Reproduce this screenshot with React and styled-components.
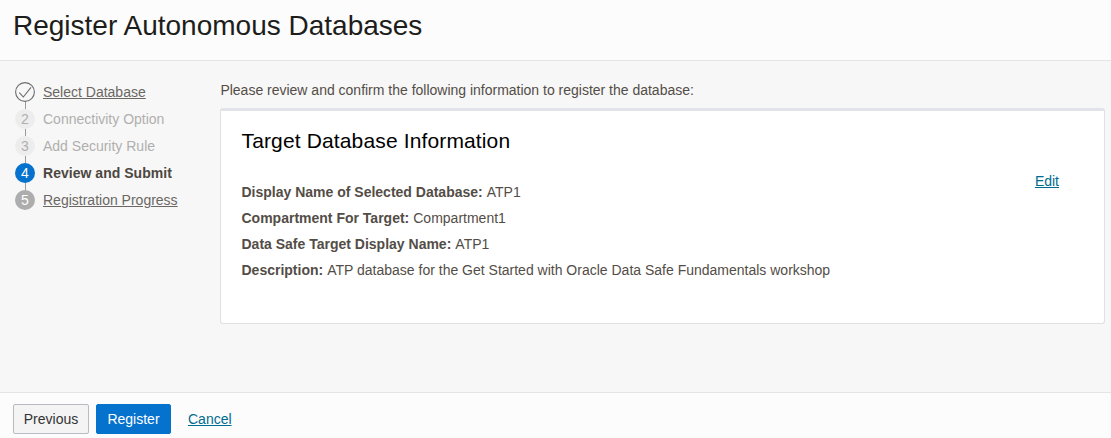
import React from "react";
import styled, { createGlobalStyle, css } from "styled-components";

const GlobalStyle = createGlobalStyle`
  * { box-sizing: border-box; }
  body {
    margin: 0;
    background: #f7f7f7;
    color: #534d47;
    font-family: "Liberation Sans", Arial, sans-serif;
    font-size: 14px;
    line-height: 20px;
  }
`;

const Page = styled.div`
  display: flex;
  flex-direction: column;
  height: 438px;
  overflow: hidden;
`;

const Header = styled.header`
  flex: none;
  height: 61px;
  padding: 9px 13px 0;
  background: #fcfcfc;
  border-bottom: 1px solid #e4e4e4;
`;

const Title = styled.h1`
  margin: 0;
  font-size: 28px;
  line-height: 34px;
  font-weight: 400;
  color: #1d1d1b;
  white-space: nowrap;
`;

const Body = styled.main`
  flex: 1;
  display: flex;
  padding: 0 6px 0 15px;
`;

const Steps = styled.ol`
  flex: none;
  width: 205px;
  margin: 0;
  padding: 21px 0 0;
  list-style: none;
`;

const Step = styled.li`
  display: flex;
  gap: 8px;
  height: 27px;
`;

const Rail = styled.div`
  display: flex;
  flex-direction: column;
  align-items: center;
  width: 20px;
`;

const Connector = styled.span`
  width: 1px;
  height: 7px;
  margin-left: 1px;
  background: #9a9a9a;
`;

const markers = {
  done: css`background: transparent;`,
  disabled: css`background: #ededed; color: #b0afae;`,
  current: css`background: #0572ce; color: #fff;`,
  next: css`background: #adadad; color: #fff;`,
};

const Marker = styled.span`
  flex: none;
  width: 20px;
  height: 20px;
  border-radius: 50%;
  text-align: center;
  ${(p) => markers[p.$state]}
`;

const labels = {
  done: css`color: #6a6764; text-decoration: underline;`,
  disabled: css`color: #b0afae;`,
  current: css`color: #4d4741; font-weight: 700; letter-spacing: 0.03px;`,
  next: css`color: #6a6764; text-decoration: underline;`,
};

const StepLabel = styled.span`
  white-space: nowrap;
  ${(p) => labels[p.$state]}
`;

const CheckSvg = styled.svg`
  display: block;
`;

const Content = styled.section`
  flex: 1;
  padding-top: 19px;
`;

const Intro = styled.p`
  margin: 0 0 8px 0.4px;
  letter-spacing: -0.006px;
`;

const Card = styled.article`
  height: 216px;
  padding: 18px 45px 0 20.5px;
  background: #fff;
  border: 1px solid #dfe0e3;
  border-top: 3px solid #e1e3e8;
  border-radius: 3px;
`;

const CardTitle = styled.h2`
  margin: 0;
  font-size: 21px;
  line-height: 24px;
  font-weight: 400;
  letter-spacing: 0.14px;
  color: #000;
`;

const CardBody = styled.div`
  display: flex;
  justify-content: space-between;
  align-items: flex-start;
  padding-top: 18px;
`;

const Details = styled.dl`
  margin: 8px 0 0;
`;

const Detail = styled.div`
  display: flex;
  gap: 4px;
  line-height: 26px;
  white-space: nowrap;
`;

const Term = styled.dt`
  font-weight: 700;
`;

const Value = styled.dd`
  margin: 0;
`;

const Link = styled.a`
  color: #006b8f;
  text-decoration: underline;
  cursor: pointer;
`;

const Footer = styled.footer`
  flex: none;
  display: flex;
  align-items: center;
  height: 46px;
  padding: 7px 13px 0;
  background: #fcfcfc;
  border-top: 1px solid #e4e4e4;
`;

const Button = styled.button`
  width: ${(p) => p.$width}px;
  height: 30px;
  margin-right: ${(p) => p.$gap}px;
  padding: 0;
  border: 1px solid ${(p) => (p.$primary ? "#0572ce" : "#b8bbc4")};
  border-radius: 2px;
  background: ${(p) => (p.$primary ? "#0572ce" : "#f4f4f4")};
  color: ${(p) => (p.$primary ? "#fff" : "#333")};
  font: inherit;
`;

const steps = [
  { label: "Select Database", state: "done" },
  { label: "Connectivity Option", state: "disabled" },
  { label: "Add Security Rule", state: "disabled" },
  { label: "Review and Submit", state: "current" },
  { label: "Registration Progress", state: "next" },
];

const details = [
  { term: "Display Name of Selected Database:", value: "ATP1" },
  { term: "Compartment For Target:", value: "Compartment1" },
  { term: "Data Safe Target Display Name:", value: "ATP1" },
  { term: "Description:", value: "ATP database for the Get Started with Oracle Data Safe Fundamentals workshop" },
];

function CheckIcon() {
  return (
    <CheckSvg width="20" height="20" viewBox="0 0 20 20" fill="none" stroke="#6d6d6d">
      <circle cx="10" cy="10" r="9.4" strokeWidth="1.1" />
      <path d="M4.3 10.6 L8.3 15 L16 5.4" strokeWidth="1.1" />
    </CheckSvg>
  );
}

export default function App() {
  return (
    <Page>
      <GlobalStyle />
      <Header>
        <Title>Register Autonomous Databases</Title>
      </Header>
      <Body>
        <Steps>
          {steps.map((s, i) => (
            <Step key={s.label}>
              <Rail>
                <Marker $state={s.state}>{s.state === "done" ? <CheckIcon /> : i + 1}</Marker>
                {i < steps.length - 1 && <Connector />}
              </Rail>
              <StepLabel $state={s.state}>{s.label}</StepLabel>
            </Step>
          ))}
        </Steps>
        <Content>
          <Intro>Please review and confirm the following information to register the database:</Intro>
          <Card>
            <CardTitle>Target Database Information</CardTitle>
            <CardBody>
              <Details>
                {details.map((d) => (
                  <Detail key={d.term}>
                    <Term>{d.term}</Term>
                    <Value>{d.value}</Value>
                  </Detail>
                ))}
              </Details>
              <Link>Edit</Link>
            </CardBody>
          </Card>
        </Content>
      </Body>
      <Footer>
        <Button $width={76} $gap={7}>Previous</Button>
        <Button $primary $width={75} $gap={17}>Register</Button>
        <Link>Cancel</Link>
      </Footer>
    </Page>
  );
}
